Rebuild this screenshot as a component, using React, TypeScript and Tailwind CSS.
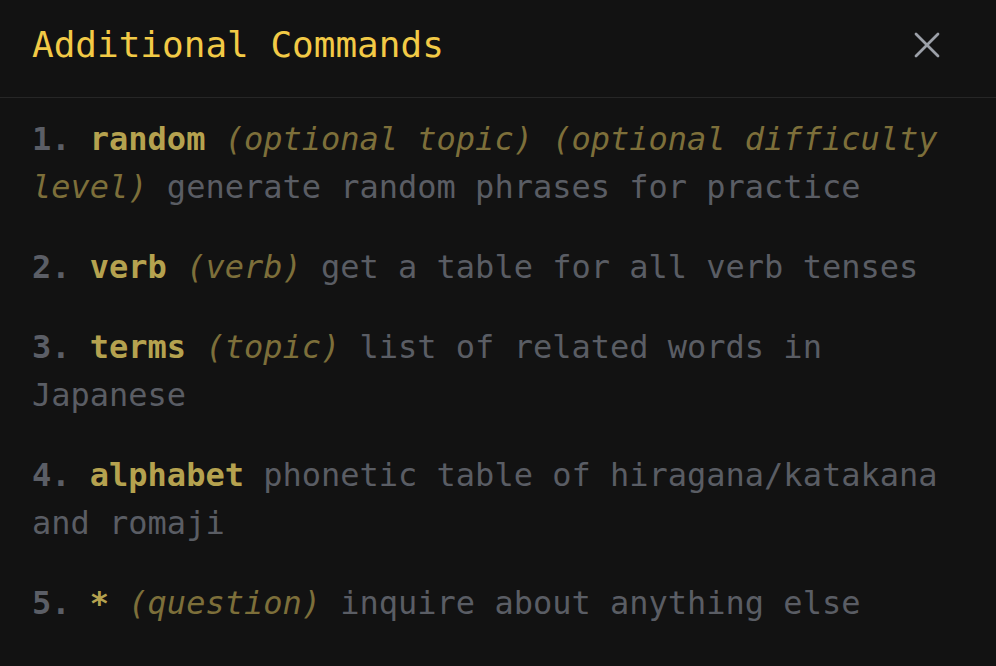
import { X } from 'lucide-react';

// Command definitions shown in the help panel
const commands = [
    { name: 'random', args: '(optional topic) (optional difficulty level)', desc: 'generate random phrases for practice' },
    { name: 'verb', args: '(verb)', desc: 'get a table for all verb tenses' },
    { name: 'terms', args: '(topic)', desc: 'list of related words in Japanese' },
    { name: 'alphabet', args: '', desc: 'phonetic table of hiragana/katakana and romaji' },
    { name: '*', args: '(question)', desc: 'inquire about anything else' },
];

export default function App() {
    return (
        <div
            className="w-[996px] h-[666px] bg-[#121212] overflow-hidden"
            style={{ fontFamily: '"DejaVu Sans Mono", "Liberation Mono", monospace' }}
        >
            {/* Header */}
            <div className="flex justify-between items-center h-[98px] pl-8 pr-[47px] pb-[8px] border-b border-[#262626]">
                <h2 className="text-[36px] leading-[54px] text-[#f2ca46]">Additional Commands</h2>
                <button aria-label="Close" className="text-[#9ca0a8]">
                    <X className="h-[44px] w-[44px]" strokeWidth={1.5} />
                </button>
            </div>

            {/* Command list */}
            <ol className="px-8 pt-[17px] flex flex-col gap-8 text-[32px] leading-[48px] text-[#5a5d64]">
                {commands.map((cmd, i) => (
                    <li key={cmd.name}>
                        <span className="font-bold text-[#5b5e66]">{i + 1}.</span>{' '}
                        <span className="font-bold text-[#b5a24f]">{cmd.name}</span>
                        {cmd.args && <span className="italic text-[#7d6f3a]"> {cmd.args}</span>}
                        <span> {cmd.desc}</span>
                    </li>
                ))}
            </ol>
        </div>
    );
}
